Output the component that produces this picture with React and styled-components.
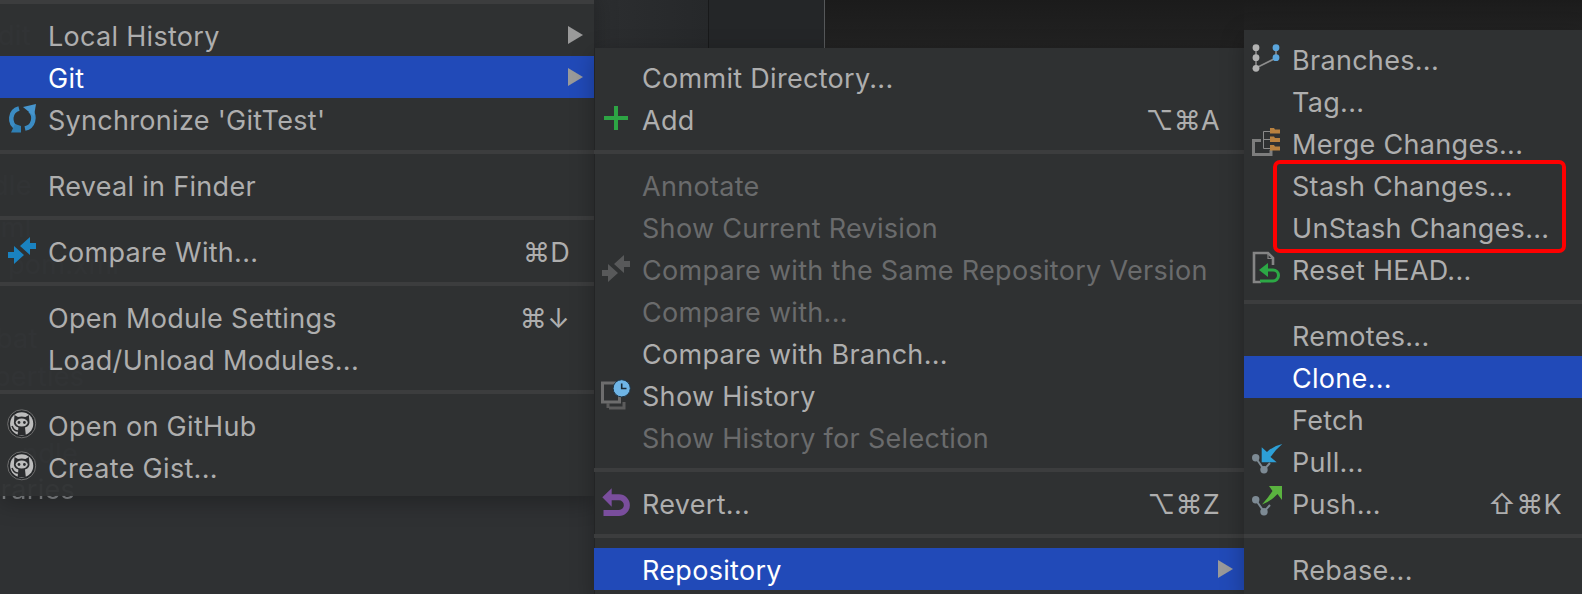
import React from "react";
import styled, { createGlobalStyle } from "styled-components";

const GlobalStyle = createGlobalStyle`
  html, body {
    margin: 0;
    background: #2f3133;
  }
`;

const Stage = styled.div`
  width: 1582px;
  height: 594px;
  display: flex;
  overflow: hidden;
  background: #2f3133;
  font-family: Inter, "Liberation Sans", "DejaVu Sans", sans-serif;
  font-size: 27px;
  letter-spacing: 0.3px;
`;

const Column = styled.div`
  position: relative;
  flex: none;
  width: ${(p) => p.$width}px;
  height: 594px;
  display: flex;
  flex-direction: column;
`;

const Strip = styled.div`
  flex: none;
  height: ${(p) => p.$height}px;
  display: flex;
  background: linear-gradient(#1b1b1b, #222222);
`;

const Tab = styled.div`
  flex: none;
  width: ${(p) => p.$width}px;
  background: ${(p) => p.$bg};
  border-right: 1px solid ${(p) => p.$line};
`;

const Ghost = styled.span`
  position: absolute;
  left: ${(p) => p.$x}px;
  top: ${(p) => p.$y}px;
  line-height: 30px;
  color: ${(p) => p.$color || "#54585c"};
  filter: blur(0.6px);
`;

const Menu = styled.div`
  position: relative;
  z-index: 1;
  flex: none;
  margin-top: ${(p) => p.$offset || 0}px;
  padding: ${(p) => p.$padTop ?? 8}px 0 8px;
  background: rgba(47, 49, 51, 0.95);
  box-shadow: ${(p) => (p.$edge ? "inset 1px 0 0 #232425, " : "")}0 6px 22px rgba(0, 0, 0, 0.28);
`;

const Row = styled.div`
  height: 42px;
  display: flex;
  align-items: center;
  padding: 0 ${(p) => p.$right || 24}px 0 8px;
  white-space: nowrap;
  color: ${(p) =>
    p.$selected ? "#ffffff" : p.$disabled ? "#6a6b6c" : "#aeaeae"};
  background: ${(p) => (p.$selected ? "#214ab8" : "transparent")};
`;

const IconSlot = styled.span`
  flex: none;
  width: 28px;
  height: 28px;
  margin-right: 12px;
  display: block;

  svg {
    display: block;
    overflow: visible;
  }
`;

const Label = styled.span`
  flex: 1;
  padding-top: 2px;
`;

const Shortcut = styled.span`
  flex: none;
  padding-top: 2px;
  font-family: "Inter", "DejaVu Sans", sans-serif;
`;

const Arrow = styled.span`
  flex: none;
  width: 0;
  height: 0;
  margin-right: -13px;
  border-left: 15px solid #9a9a9a;
  border-top: 9px solid transparent;
  border-bottom: 9px solid transparent;
`;

const Separator = styled.div`
  height: 4px;
  margin: 10px 0;
  background: #3c3d3e;
`;

const Annotated = styled.div`
  position: relative;
`;

const RedBox = styled.div`
  position: absolute;
  left: 29px;
  top: -4px;
  width: 293px;
  height: 93px;
  box-sizing: border-box;
  border: 4px solid #fe0000;
  border-radius: 7px;
`;

const Svg = ({ children }) => (
  <svg width="28" height="28" viewBox="0 0 28 28">
    {children}
  </svg>
);

const Sync = () => (
  <Svg>
    <path d="M11 3.5 A10.5 10.5 0 0 0 9 23" fill="none" stroke="#3b8cc4" strokeWidth="4.5" />
    <path d="M17 23.5 A10.5 10.5 0 0 0 22 5.5" fill="none" stroke="#3b8cc4" strokeWidth="4.5" />
    <path d="M15 2 L28 -1 L26 11 Z" fill="#4796ce" />
    <path d="M13 27.5 L3 27.5 L7 19 L13 21 Z" fill="#2f7fb4" />
  </Svg>
);

const Compare = ({ color }) => (
  <Svg>
    <path d="M12 9 L22 0 V6 H28 V12 H22 V18 Z" fill={color} />
    <path d="M16 18 L6 9 V15 H0 V21 H6 V27 Z" fill={color} />
  </Svg>
);

const Plus = () => (
  <Svg>
    <path d="M12 1 H16 V11 H26 V15 H16 V25 H12 V15 H2 V11 H12 Z" fill="#2da444" />
  </Svg>
);

const History = () => (
  <Svg>
    <rect x="0.5" y="2" width="17" height="19" fill="none" stroke="#6d6d6d" strokeWidth="3" />
    <path d="M7 27 H22 V21" fill="none" stroke="#5c5c5c" strokeWidth="3" />
    <path d="M6 22 V27" fill="none" stroke="#5c5c5c" strokeWidth="3" />
    <circle cx="19.7" cy="7.3" r="8.6" fill="#6fb5e6" stroke="#1f3445" strokeWidth="1" />
    <path d="M19.7 2.5 V7.5 H24.5" fill="none" stroke="#1c2b36" strokeWidth="1.6" />
  </Svg>
);

const Revert = () => (
  <Svg>
    <path d="M9.7 -0.7 L0.3 8.3 L9.7 17.7 Z" fill="#7a4e9d" />
    <path d="M9 8.3 H17 a7.85 7.85 0 0 1 0 15.7 H1.5" fill="none" stroke="#7a4e9d" strokeWidth="6" />
  </Svg>
);

const Branches = () => (
  <Svg>
    <path d="M4 3 V23 L24 13 V3" fill="none" stroke="#8c8c8c" strokeWidth="1.6" />
    <circle cx="4" cy="2.7" r="3.4" fill="#b2b2b2" />
    <circle cx="4" cy="12.7" r="3.4" fill="#b2b2b2" />
    <circle cx="4" cy="23.3" r="3.4" fill="#b2b2b2" />
    <circle cx="24" cy="2.7" r="3.4" fill="#5ba6dd" />
    <circle cx="24" cy="12.7" r="3.4" fill="#5ba6dd" />
  </Svg>
);

const Merge = () => (
  <Svg>
    <path d="M9 11.5 H1.5 V25.5 H19 V21" fill="none" stroke="#7d7d7d" strokeWidth="3" />
    <path d="M18 2.5 H11.5 V19.5 H18 M11.5 10.5 H18" fill="none" stroke="#8a8a8a" strokeWidth="1" />
    <path d="M18 -1 H22 L23 0.5 H28 V4.5 H18 Z" fill="#b9813f" />
    <path d="M18 7.5 H22 L23 9 H28 V13 H18 Z" fill="#b9813f" />
    <path d="M18 16 H22 L23 17.5 H28 V21.5 H18 Z" fill="#b9813f" />
  </Svg>
);

const Reset = () => (
  <Svg>
    <path d="M9 27 H2 V-2 H16 L21 3 V10" fill="none" stroke="#858585" strokeWidth="2.6" />
    <path d="M16 -2 V3.5 H21" fill="none" stroke="#858585" strokeWidth="1.2" />
    <path d="M7 15 L16 8 V22 Z" fill="#2ca845" />
    <path d="M14 15 H21 a5.5 5.5 0 0 1 0 11 H8" fill="none" stroke="#2ca845" strokeWidth="3" />
  </Svg>
);

const VcsDots = () => (
  <>
    <path d="M3.7 10.7 L12 22.7 L18 16" fill="none" stroke="#7d8a94" strokeWidth="2" />
    <circle cx="3.7" cy="10.7" r="3.7" fill="#7d8a94" />
    <circle cx="12" cy="22.7" r="3.7" fill="#7d8a94" />
  </>
);

const Pull = () => (
  <Svg>
    <VcsDots />
    <path d="M9.7 0.3 V15.3 H24.7 L18.5 10 Q23 3 30.3 -3 Q21 -1 15 5 Z" fill="#2d9fd6" />
  </Svg>
);

const Push = () => (
  <Svg>
    <VcsDots />
    <path d="M17 -3 H30 V11 L25.5 5 Q18 13 10 15.5 Q16 9 20.5 2 Z" fill="#5ab33f" />
  </Svg>
);

const Github = () => (
  <Svg>
    <circle cx="13.7" cy="12.8" r="14" fill="#26282a" stroke="#6f6f6f" strokeWidth="1" />
    <circle cx="13.7" cy="12.8" r="11.6" fill="#bdbdbd" />
    <path d="M6.5 4 L10 6 Q13.7 5 17.4 6 L20.9 4 L21.3 9 Q22.5 15 17 16.5 L17.8 24 H9.6 L10.4 16.5 Q4.9 15 6.1 9 Z" fill="#2b2c2e" />
    <ellipse cx="13.7" cy="11.5" rx="6" ry="4" fill="#bdbdbd" />
    <circle cx="11" cy="11.5" r="1.4" fill="#2b2c2e" />
    <circle cx="16.4" cy="11.5" r="1.4" fill="#2b2c2e" />
    <path d="M4 15 Q6 20 10 20" fill="none" stroke="#2b2c2e" strokeWidth="1.6" />
  </Svg>
);

const Item = ({ icon, label, shortcut, submenu, selected, disabled, right }) => (
  <Row $selected={selected} $disabled={disabled} $right={right}>
    <IconSlot>{icon}</IconSlot>
    <Label>{label}</Label>
    {shortcut && <Shortcut>{shortcut}</Shortcut>}
    {submenu && <Arrow />}
  </Row>
);

export default function App() {
  return (
    <Stage>
      <GlobalStyle />

      <Column $width={594}>
        <Ghost $x={-2} $y={21}>dit</Ghost>
        <Ghost $x={-6} $y={58} $color="#4a66b8">ash.png</Ghost>
        <Ghost $x={-8} $y={171}>dle</Ghost>
        <Ghost $x={-6} $y={213}>iml</Ghost>
        <Ghost $x={8} $y={250}>pom.xml</Ghost>
        <Ghost $x={-4} $y={324}>bat</Ghost>
        <Ghost $x={-6} $y={362}>perties</Ghost>
        <Ghost $x={22} $y={439}>ndle</Ghost>
        <Ghost $x={-16} $y={475} $color="#85888b">braries</Ghost>
        <Menu $offset={-10} $padTop={0}>
          <Separator />
          <Item label="Local History" submenu />
          <Item label="Git" submenu selected />
          <Item label="Synchronize 'GitTest'" icon={<Sync />} />
          <Separator />
          <Item label="Reveal in Finder" />
          <Separator />
          <Item label="Compare With..." icon={<Compare color="#1a82c0" />} shortcut="⌘D" />
          <Separator />
          <Item label="Open Module Settings" shortcut="⌘↓" />
          <Item label="Load/Unload Modules..." />
          <Separator />
          <Item label="Open on GitHub" icon={<Github />} />
          <Item label="Create Gist..." icon={<Github />} />
        </Menu>
      </Column>

      <Column $width={650}>
        <Strip $height={48}>
          <Tab $width={114} $bg="linear-gradient(90deg, #2c2e30, #26282a)" $line="#18191a" />
          <Tab $width={115} $bg="#242628" $line="#56585a" />
        </Strip>
        <Menu $edge>
          <Item label="Commit Directory..." />
          <Item label="Add" icon={<Plus />} shortcut="⌥⌘A" />
          <Separator />
          <Item label="Annotate" disabled />
          <Item label="Show Current Revision" disabled />
          <Item label="Compare with the Same Repository Version" disabled icon={<Compare color="#58595a" />} />
          <Item label="Compare with..." disabled />
          <Item label="Compare with Branch..." />
          <Item label="Show History" icon={<History />} />
          <Item label="Show History for Selection" disabled />
          <Separator />
          <Item label="Revert..." icon={<Revert />} shortcut="⌥⌘Z" />
          <Separator />
          <Item label="Repository" submenu selected />
        </Menu>
      </Column>

      <Column $width={338}>
        <Strip $height={30} />
        <Menu>
          <Item label="Branches..." icon={<Branches />} />
          <Item label="Tag..." />
          <Item label="Merge Changes..." icon={<Merge />} />
          <Annotated>
            <Item label="Stash Changes..." />
            <Item label="UnStash Changes..." />
            <RedBox />
          </Annotated>
          <Item label="Reset HEAD..." icon={<Reset />} />
          <Separator />
          <Item label="Remotes..." />
          <Item label="Clone..." selected />
          <Item label="Fetch" />
          <Item label="Pull..." icon={<Pull />} />
          <Item label="Push..." icon={<Push />} shortcut="⇧⌘K" right={20} />
          <Separator />
          <Item label="Rebase..." />
        </Menu>
      </Column>
    </Stage>
  );
}
